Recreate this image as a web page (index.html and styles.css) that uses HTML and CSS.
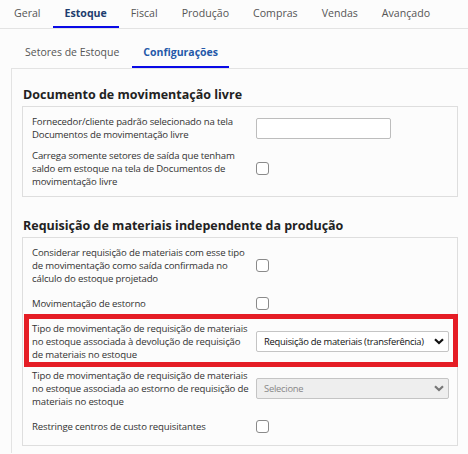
FILE: index.html
```html
<!DOCTYPE html>
<html lang="pt">
<head>
<meta charset="utf-8">
<link rel="stylesheet" href="styles.css">
</head>
<body>
<nav class="tabs">
  <span class="tab">Geral</span>
  <span class="tab active">Estoque</span>
  <span class="tab">Fiscal</span>
  <span class="tab">Produção</span>
  <span class="tab">Compras</span>
  <span class="tab">Vendas</span>
  <span class="tab">Avançado</span>
</nav>
<div class="area">
  <nav class="subtabs">
    <span class="subtab">Setores de Estoque</span>
    <span class="subtab active">Configurações</span>
  </nav>
  <div class="panel">
    <h2 class="heading">Documento de movimentação livre</h2>
    <div class="box">
      <div class="row">
        <div class="label">Fornecedor/cliente padrão selecionado na tela Documentos de movimentação livre</div>
        <div class="control"><span class="input"></span></div>
      </div>
      <div class="row">
        <div class="label">Carrega somente setores de saída que tenham saldo em estoque na tela de Documentos de movimentação livre</div>
        <div class="control"><span class="check"></span></div>
      </div>
    </div>
    <h2 class="heading second">Requisição de materiais independente da produção</h2>
    <div class="box">
      <div class="row">
        <div class="label">Considerar requisição de materiais com esse tipo de movimentação como saída confirmada no cálculo do estoque projetado</div>
        <div class="control"><span class="check"></span></div>
      </div>
      <div class="row">
        <div class="label">Movimentação de estorno</div>
        <div class="control"><span class="check"></span></div>
      </div>
      <div class="row highlighted">
        <div class="label">Tipo de movimentação de requisição de materiais no estoque associada à devolução de requisição de materiais no estoque</div>
        <div class="control">
          <span class="select"><span class="select-text">Requisição de materiais (transferência)</span>
            <svg class="chev" width="10" height="7" viewBox="0 0 10 7"><path d="M1 1.2 L5 5 L9 1.2" fill="none" stroke="#111" stroke-width="2.2"/></svg>
          </span>
        </div>
      </div>
      <div class="row">
        <div class="label">Tipo de movimentação de requisição de materiais no estoque associada ao estorno de requisição de materiais no estoque</div>
        <div class="control">
          <span class="select disabled"><span class="select-text">Selecione</span>
            <svg class="chev" width="10" height="7" viewBox="0 0 10 7"><path d="M1 1.2 L5 5 L9 1.2" fill="none" stroke="#777" stroke-width="2.2"/></svg>
          </span>
        </div>
      </div>
      <div class="row">
        <div class="label">Restringe centros de custo requisitantes</div>
        <div class="control"><span class="check"></span></div>
      </div>
    </div>
  </div>
</div>
</body>
</html>
```

FILE: styles.css
```css
html, body {
  margin: 0;
  padding: 0;
  background: #fcfcfc;
  font-family: "Open Sans", "Liberation Sans", sans-serif;
  color: #333;
}
body {
  width: 468px;
  height: 454px;
  overflow: hidden;
}
.tabs {
  display: flex;
  height: 28px;
  padding-left: 2px;
  border-bottom: 1px solid #e3e3e3;
}
.tab {
  display: flex;
  align-items: center;
  padding: 0 12px;
  height: 26px;
  font-size: 10.6px;
  color: #555;
  border-bottom: 2px solid transparent;
}
.tab.active {
  font-weight: 700;
  color: #1e3c6e;
  border-bottom-color: #0a0ae6;
}
.area {
  margin-left: 11px;
}
.subtabs {
  display: flex;
  height: 39px;
  padding-left: 3px;
  gap: 2px;
  border-bottom: 1px solid #e3e3e3;
}
.subtab {
  display: flex;
  align-items: center;
  padding: 8px 11px 0;
  height: 29px;
  font-size: 10.5px;
  color: #555;
  border-bottom: 2px solid transparent;
}
.subtab.active {
  font-weight: 700;
  color: #2458a8;
  border-bottom-color: #0a0ae6;
}
.panel {
  border-left: 1px solid #e3e3e3;
  padding: 16px 10px 0 10px;
  height: 368px;
}
.heading {
  margin: 0 0 1px 0;
  font-size: 12.5px;
  line-height: 20px;
  font-weight: 700;
  color: #222;
  padding-left: 1px;
}
.heading.second {
  margin-top: 19px;
}
.box {
  border: 1px solid #dedede;
  padding: 4px 9px 4px 9px;
  background: #fcfcfc;
}
.row {
  display: flex;
  align-items: center;
  padding: 4px 0;
  min-height: 21px;
  position: relative;
}
.label {
  flex: 0 0 219px;
  margin-right: 5px;
  font-size: 9.6px;
  letter-spacing: -0.15px;
  line-height: 13px;
  color: #333;
}
.control {
  flex: 1;
  display: flex;
  align-items: center;
}
.input {
  display: block;
  width: 133px;
  height: 19px;
  border: 1px solid #bdbdbd;
  border-radius: 2px;
  background: #fff;
}
.check {
  display: block;
  width: 11px;
  height: 11px;
  border: 1px solid #8a8a8a;
  border-radius: 3px;
  background: #fff;
}
.select {
  display: flex;
  align-items: center;
  justify-content: space-between;
  box-sizing: border-box;
  width: 193px;
  height: 21px;
  padding: 0 4px 0 7px;
  border: 1px solid #c4c4c4;
  border-radius: 2px;
  background: #fff;
  font-size: 9.4px;
  letter-spacing: -0.25px;
  color: #111;
}
.select.disabled {
  background: #eeeeee;
  color: #888;
}
.highlighted::after {
  content: "";
  position: absolute;
  left: -8px;
  right: -10px;
  top: -4px;
  bottom: -2px;
  border: 5px solid #e51d25;
  pointer-events: none;
}
```
